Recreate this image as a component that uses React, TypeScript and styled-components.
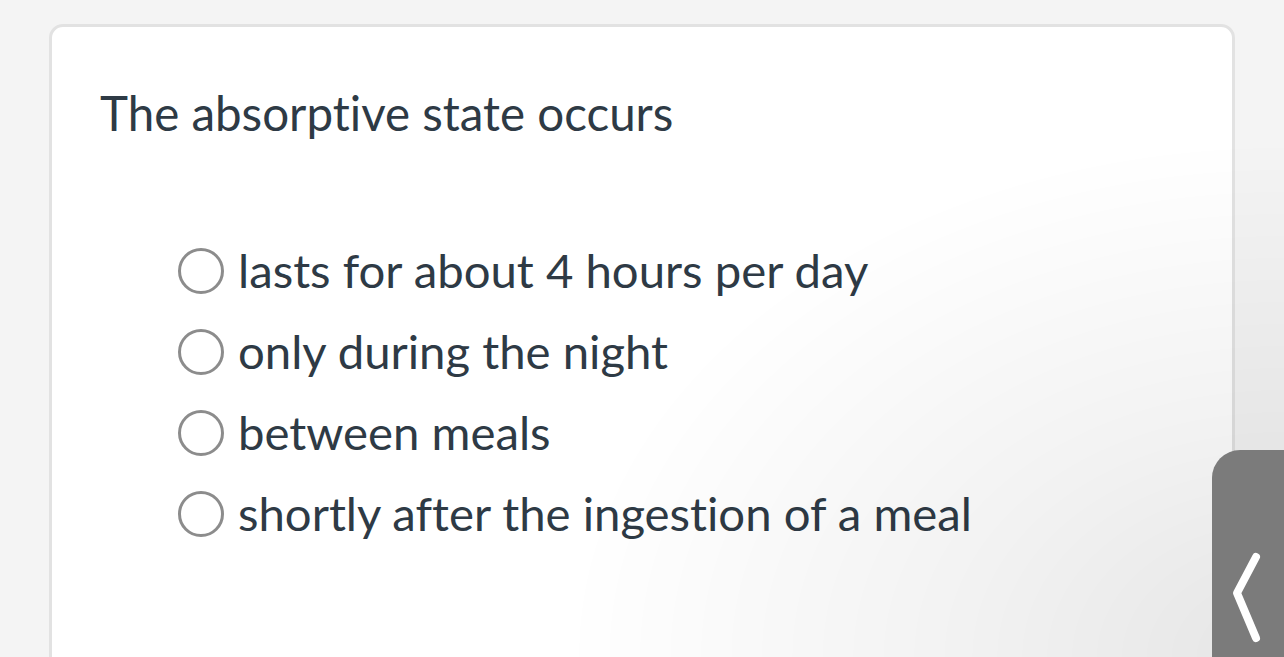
import * as React from "react";
import styled, { createGlobalStyle } from "styled-components";

const GlobalStyle = createGlobalStyle`
    html, body {
        margin: 0;
        padding: 0;
        height: 100%;
        overflow: hidden;
        background: #f4f4f4;
        font-family: Lato, "Noto Sans", sans-serif;
        font-variant-ligatures: none;
    }
`;

const Page = styled.div`
    height: 657px;
    padding: 24px 49px 0 49px;
    box-sizing: border-box;
    overflow: hidden;
`;

const Card = styled.div`
    height: 700px;
    box-sizing: border-box;
    background: #ffffff;
    border: 3px solid #e2e2e2;
    border-radius: 14px;
    padding: 58px 0 0 48px;
`;

const Question = styled.h1`
    margin: 0;
    font-size: 47.5px;
    font-weight: 400;
    line-height: 56px;
    color: #2e3a45;
`;

const Options = styled.ul`
    list-style: none;
    margin: 100px 0 0 0;
    padding: 0 0 0 78px;
    display: flex;
    flex-direction: column;
    gap: 25px;
`;

const Option = styled.li`
    display: flex;
    align-items: center;
    gap: 14px;
    height: 56px;
    font-size: 47.3px;
    color: #2e3a45;
    cursor: pointer;
`;

const Radio = styled.span`
    width: 40px;
    height: 40px;
    flex: none;
    border: 3px solid #8c8c8c;
    border-radius: 50%;
    background: #fff;
    margin-top: 3px;
`;

const Shade = styled.div`
    position: fixed;
    inset: 0;
    pointer-events: none;
    background: radial-gradient(
        ellipse 720px 520px at 100% 100%,
        rgba(0, 0, 0, 0.1) 0%,
        rgba(0, 0, 0, 0.05) 45%,
        rgba(0, 0, 0, 0) 100%
    );
`;

const BackTab = styled.button`
    position: fixed;
    top: 450px;
    right: 0;
    bottom: 0;
    width: 72px;
    border: none;
    padding: 99px 0 0 0;
    background: #7b7b7b;
    border-top-left-radius: 28px;
    display: flex;
    align-items: flex-start;
    justify-content: center;
    cursor: pointer;
`;

const answers = [
    "lasts for about 4 hours per day",
    "only during the night",
    "between meals",
    "shortly after the ingestion of a meal",
];

export default function App() {
    return (
        <>
            <GlobalStyle />
            <Page>
                <Card>
                    <Question>The absorptive state occurs</Question>
                    <Options>
                        {answers.map((a) => (
                            <Option key={a}>
                                <Radio />
                                {a}
                            </Option>
                        ))}
                    </Options>
                </Card>
            </Page>
            <Shade />
            <BackTab aria-label="Back">
                <svg width="40" height="100" viewBox="0 0 40 100">
                    <path
                        d="M28 8 L9 44 L28 89"
                        fill="none"
                        stroke="#ffffff"
                        strokeWidth="8"
                        strokeLinecap="round"
                        strokeLinejoin="round"
                    />
                </svg>
            </BackTab>
        </>
    );
}
